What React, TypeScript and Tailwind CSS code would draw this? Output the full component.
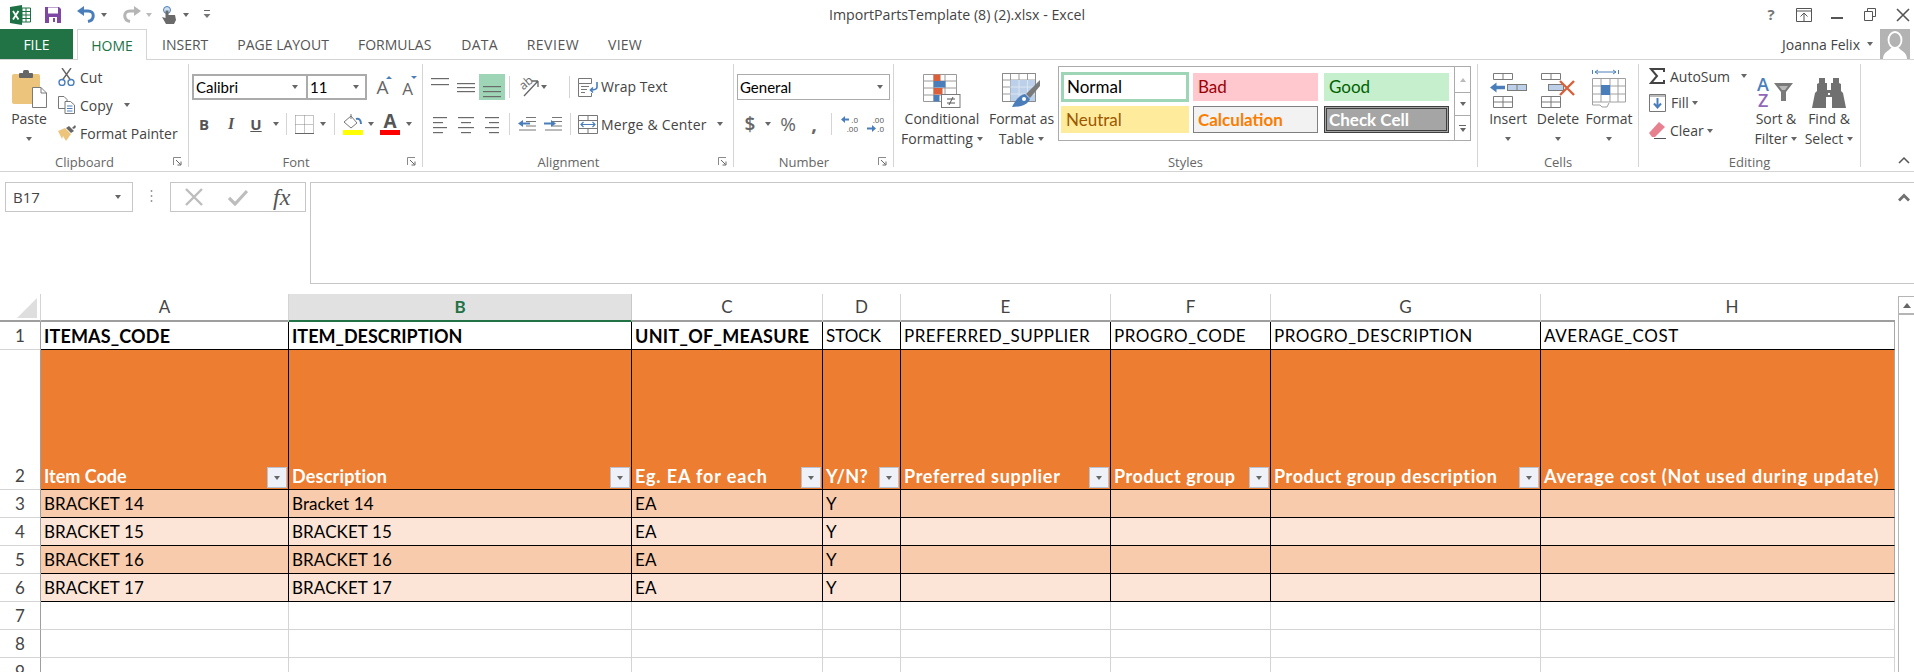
import React from "react";

const Caret = ({ className = "" }: { className?: string }) => (
  <span className={`inline-block w-0 h-0 border-l-[3.5px] border-r-[3.5px] border-t-[4px] border-l-transparent border-r-transparent border-t-[#666] ${className}`} />
);

const Launcher = () => (
  <svg width="9" height="9" viewBox="0 0 9 9" className="absolute right-[6px] bottom-[1px]">
    <path d="M0.5 8V0.5H8" fill="none" stroke="#8a8a8a" />
    <path d="M3 3L7.5 7.5M8 4.5V8H4.5" fill="none" stroke="#666" />
  </svg>
);

const Lines = ({ w, ys, xs }: { w: number; ys: number[]; xs?: number[][] }) => (
  <svg width={w} height={ys[ys.length - 1] + 2} className="block">
    {ys.map((y, i) => (
      <rect key={i} x={xs ? xs[i][0] : 0} y={y} width={xs ? xs[i][1] : w} height="1.2" fill="#6a6a6a" />
    ))}
  </svg>
);

const Sep = () => <div className="w-px h-[22px] bg-[#d4d4d4] shrink-0" />;

const Group = ({ className, label, launcher, children }: { className: string; label: string; launcher?: boolean; children: React.ReactNode }) => (
  <div className={`relative h-[103px] mt-[4px] border-r border-[#d4d4d4] shrink-0 ${className}`}>
    <div className="h-[88px] flex">{children}</div>
    <div className={`h-[15px] leading-[20px] text-center text-[13px] text-[#666] ${launcher ? "pr-[19px]" : ""}`}>{label}</div>
    {launcher && <Launcher />}
  </div>
);

const Tall = ({ className, icon, l1, l2 }: { className: string; icon: React.ReactNode; l1: string; l2?: string }) => (
  <div className={`flex flex-col items-center shrink-0 ${className}`}>
    <div className="h-[45px] flex items-end justify-center pb-[1px]">{icon}</div>
    <div className="h-[20px] leading-[20px] whitespace-nowrap">{l1}</div>
    <div className="h-[19px] leading-[19px] whitespace-nowrap flex items-center gap-[4px]">
      {l2 && <span>{l2}</span>}
      <Caret />
    </div>
  </div>
);

const InsertIcon = () => (
  <svg width="38" height="36" viewBox="0 0 38 36" fill="none" stroke="#7a7a7a">
    <path d="M4.5 1.5H23.5V7.5H4.5ZM14 1.5V7.5M4.5 24.5H23.5V35.5H4.5ZM4.5 30H23.5M14 24.5V35.5" />
    <rect x="18.5" y="12.5" width="19" height="6" fill="#bdd0e9" />
    <path d="M28 12.5V18.5" />
    <path d="M1 15.5L7.5 10.5V13.8H16V17.2H7.5V20.5Z" fill="#4a7ebb" stroke="none" />
  </svg>
);
const DeleteIcon = () => (
  <svg width="37" height="36" viewBox="0 0 37 36" fill="none" stroke="#7a7a7a">
    <path d="M1.5 1.5H20.5V7.5H1.5ZM11 1.5V7.5M1.5 24.5H20.5V35.5H1.5ZM1.5 30H20.5M11 24.5V35.5" />
    <rect x="8.5" y="12.5" width="15" height="6" fill="#bdd0e9" />
    <path d="M20 9L34 23M34 9L20 23" stroke="#d9603a" strokeWidth="2.4" />
  </svg>
);
const FormatIcon = () => (
  <svg width="34" height="39" viewBox="0 0 34 39" fill="none">
    <path d="M0.5 1V5M26.5 1V5M3 3H24M3 3L6 1M3 3L6 5M24 3L21 1M24 3L21 5" stroke="#4a7ebb" />
    <path d="M0.5 9.5H33.5V33H0.5ZM0.5 17H33.5M0.5 25H33.5M9 9.5V33M18 9.5V33M26 9.5V33" stroke="#a0a0a0" />
    <rect x="9" y="16" width="9" height="10" fill="#4a7ebb" />
    <path d="M0.5 33V36H8L10 38H15L17 34" stroke="#a0a0a0" />
  </svg>
);
const CFIcon = () => (
  <svg width="38" height="34" viewBox="0 0 38 34" fill="none">
    <path d="M0.5 0.5H33.5V27.5H0.5ZM0.5 7H33.5M0.5 14H33.5M0.5 21H33.5M11 0.5V27.5M22 0.5V27.5" stroke="#9a9a9a" />
    <rect x="10.5" y="0.5" width="7" height="6.5" fill="#d9603a" />
    <rect x="10.5" y="7" width="12" height="6.5" fill="#4a7ebb" />
    <rect x="10.5" y="14" width="9" height="6.5" fill="#d9603a" />
    <rect x="10.5" y="21" width="6" height="6.5" fill="#4a7ebb" />
    <rect x="18.5" y="20.5" width="18.5" height="13" fill="#fff" stroke="#7a7a7a" />
    <path d="M24 25H32M24 29H32M30 23L26 31" stroke="#555" />
  </svg>
);
const FTIcon = () => (
  <svg width="39" height="35" viewBox="0 0 39 35" fill="none">
    <path d="M0.5 0.5H33.5V28.5H0.5ZM0.5 7H33.5M0.5 14H33.5M0.5 21H33.5M8.5 0.5V28.5M17 0.5V28.5M25.5 0.5V28.5" stroke="#9a9a9a" />
    <rect x="8.5" y="7" width="25" height="21.5" fill="#bdd0e9" />
    <path d="M8.5 14H33.5M8.5 21H33.5M17 7V28.5M25.5 7V28.5" stroke="#dbe5f1" />
    <path d="M0.5 0.5H33.5V28.5H0.5Z" stroke="#8a8a8a" />
    <path d="M38 7L24 21L28 25L38 13Z" fill="#7a7a7a" />
    <path d="M10 34C13 28 17 22 23 21L28 26C26 31 20 34 10 34Z" fill="#4a7ebb" />
    <circle cx="22" cy="26" r="2" fill="#fff" />
  </svg>
);
const Binoculars = () => (
  <svg width="34" height="30" viewBox="0 0 34 30" fill="#707070">
    <path d="M7 0H13V5H15V12H19V5H21V0H27V5L29 6V13L31 15L34 30H20V19H14V30H0L3 15L5 13V6L7 5Z" />
    <path d="M16 15H18V17H16Z" fill="#fff" />
  </svg>
);
const SortIcon = () => (
  <div className="relative w-[38px] h-[32px] font-semibold text-[18px] leading-[16px]">
    <div className="text-[#4a7ebb] pl-[0px]">A</div>
    <div className="text-[#9068b8] pl-[1px]">Z</div>
    <svg width="20" height="19" viewBox="0 0 20 19" className="absolute left-[17px] top-[7px]">
      <path d="M0 0H19L12 9V18H7V9Z" fill="#7a7a7a" />
      <path d="M5 3H14L11 7H8Z" fill="#b8b8b8" />
    </svg>
  </div>
);

const Paste = () => (
  <svg width="35" height="38" viewBox="0 0 35 38">
    <rect x="0" y="4" width="28" height="30" rx="2" fill="#edc47c" />
    <rect x="7" y="3" width="14" height="5" rx="1" fill="#666" />
    <rect x="11" y="0" width="6" height="5" rx="1.5" fill="#666" />
    <path d="M20.5 17.5H29L34.5 23V37.5H20.5Z" fill="#fff" stroke="#7a7a7a" />
    <path d="M29 17.5V23H34.5" fill="none" stroke="#7a7a7a" />
  </svg>
);

const FilterBtn = () => (
  <div className="w-[20px] h-[21px] mb-[1px] mr-px shrink-0 flex items-center justify-center bg-[#eef1f7] border border-[#b8c2d2]">
    <Caret className="border-t-[#555]" />
  </div>
);

const DecIcon = ({ dir }: { dir: "less" | "more" }) => (
  <div className="relative w-[17px] h-[18px] text-[8px] leading-[9px] text-[#555]">
    {dir === "less" ? (
      <>
        <div className="text-right">.0</div>
        <div className="text-right">.00</div>
        <svg width="8" height="7" className="absolute left-0 top-[1px]"><path d="M0 3.5L4 0V2.5H8V4.5H4V7Z" fill="#4a7ebb" /></svg>
      </>
    ) : (
      <>
        <div className="text-right">.00</div>
        <div className="text-right">.0</div>
        <svg width="9" height="7" className="absolute left-0 top-[10px]"><path d="M9 3.5L5 0V2.5H0V4.5H5V7Z" fill="#4a7ebb" /></svg>
      </>
    )}
  </div>
);

const COLS = ["w-[248px]", "w-[343px]", "w-[191px]", "w-[78px]", "w-[210px]", "w-[160px]", "w-[270px]", "w-[354px]"];
const LETTERS = ["A", "B", "C", "D", "E", "F", "G", "H"];
const R1 = [
  { t: "ITEMAS_CODE", c: "font-bold text-[18px] tracking-[0.15px]" },
  { t: "ITEM_DESCRIPTION", c: "font-bold text-[18px]" },
  { t: "UNIT_OF_MEASURE", c: "font-bold text-[18px] tracking-[0.3px]" },
  { t: "STOCK", c: "" },
  { t: "PREFERRED_SUPPLIER", c: "tracking-[0.45px]" },
  { t: "PROGRO_CODE", c: "tracking-[0.55px]" },
  { t: "PROGRO_DESCRIPTION", c: "tracking-[0.54px]" },
  { t: "AVERAGE_COST", c: "tracking-[0.6px]" },
];
const R2 = [
  { t: "Item Code", c: "" },
  { t: "Description", c: "tracking-[0.2px]" },
  { t: "Eg. EA for each", c: "tracking-[0.87px]" },
  { t: "Y/N?", c: "tracking-[0.3px]" },
  { t: "Preferred supplier", c: "tracking-[0.7px]" },
  { t: "Product group", c: "tracking-[0.54px]" },
  { t: "Product group description", c: "tracking-[0.6px]" },
  { t: "Average cost (Not used during update)", c: "tracking-[0.8px]" },
];
const DATA = [
  ["BRACKET 14", "Bracket 14", "EA", "Y"],
  ["BRACKET 15", "BRACKET 15", "EA", "Y"],
  ["BRACKET 16", "BRACKET 16", "EA", "Y"],
  ["BRACKET 17", "BRACKET 17", "EA", "Y"],
];

const RowHead = ({ n, className = "h-[28px]" }: { n: number; className?: string }) => (
  <div className={`w-[41px] shrink-0 border-r border-b border-r-[#9e9e9e] border-b-[#d4d4d4] flex items-end justify-center text-[#444] text-[17px] leading-[27px] ${className}`}>{n}</div>
);

export default function App() {
  return (
    <div className="w-[1914px] h-[672px] overflow-hidden bg-white text-[#444] text-[14px] font-['Open_Sans',sans-serif]">
      {/* title bar */}
      <div className="grid grid-cols-[1fr_auto_1fr] h-[29px] items-center">
        <div className="flex items-center">
          <svg width="21" height="20" viewBox="0 0 21 20" className="ml-[10px]">
            <path d="M0 2L12 0V20L0 18Z" fill="#1e7145" />
            <path d="M12 3H20.5V17H12Z" fill="#fff" stroke="#1e7145" />
            <path d="M12 6.5H20.5M12 10H20.5M12 13.5H20.5M16 3V17" stroke="#1e7145" />
            <path d="M3 6L8.5 14.5M8.5 6L3 14.5" stroke="#fff" strokeWidth="1.8" />
          </svg>
          <svg width="16" height="16" viewBox="0 0 16 16" className="ml-[14px]">
            <path d="M0 0H14L16 2V16H0Z" fill="#7e47a3" />
            <rect x="3" y="0.5" width="10" height="6" fill="#fff" />
            <rect x="4" y="10" width="8" height="6" fill="#fff" />
            <rect x="8" y="11" width="2" height="4" fill="#7e47a3" />
          </svg>
          <svg width="19" height="17" viewBox="0 0 19 17" className="ml-[16px]">
            <path d="M3 5H11C18 5 18 14 11 15.5" fill="none" stroke="#4a7ebb" strokeWidth="3" />
            <path d="M0 5L7 0V10Z" fill="#4a7ebb" />
          </svg>
          <Caret className="ml-[5px]" />
          <svg width="19" height="17" viewBox="0 0 19 17" className="ml-[15px]">
            <path d="M16 5H8C1 5 1 14 8 15.5" fill="none" stroke="#b5b5b5" strokeWidth="3" />
            <path d="M19 5L12 0V10Z" fill="#b5b5b5" />
          </svg>
          <Caret className="ml-[5px] border-t-[#bbb]" />
          <svg width="15" height="18" viewBox="0 0 15 18" className="ml-[10px]">
            <circle cx="5" cy="4" r="3.5" fill="#cfdff0" stroke="#4a7ebb" />
            <path d="M3.5 4.5H6.5V9H13L14 14L12 18H4L0 11L3.5 12Z" fill="#6a6a6a" />
          </svg>
          <Caret className="ml-[6px] border-t-[#333]" />
          <svg width="8" height="9" viewBox="0 0 8 9" className="ml-[14px]">
            <path d="M1 0.5H7" stroke="#666" />
            <path d="M0.5 4H7.5L4 8Z" fill="#777" />
          </svg>
        </div>
        <div className="text-[14.2px] text-[#444] whitespace-nowrap">ImportPartsTemplate (8) (2).xlsx - Excel</div>
        <div className="flex items-center justify-end gap-[17px] pr-[3px]">
          <div className="w-[16px] text-center font-bold text-[15px] text-[#777] leading-none">?</div>
          <svg width="16" height="14" viewBox="0 0 16 14" fill="none" stroke="#555"><path d="M0.5 0.5H15.5V13.5H0.5ZM0.5 3H15.5M8 13V5M4.5 8.5L8 5L11.5 8.5" /></svg>
          <svg width="16" height="14" viewBox="0 0 16 14"><rect x="2" y="9" width="12" height="2" fill="#555" /></svg>
          <svg width="16" height="14" viewBox="0 0 16 14" fill="none" stroke="#555"><path d="M5.5 3.5V0.5H13.5V8.5H10.5M2.5 3.5H10.5V12.5H2.5Z" /></svg>
          <svg width="16" height="14" viewBox="0 0 16 14" fill="none" stroke="#555" strokeWidth="1.6"><path d="M2 1L14 13M14 1L2 13" /></svg>
        </div>
      </div>

      {/* tab bar */}
      <div className="h-[31px] flex border-b border-[#d4d4d4]">
        <div className="w-[73px] bg-[#217346] text-white flex items-center justify-center">FILE</div>
        <div className="w-[70px] ml-[4px] h-[31px] bg-white border border-b-0 border-[#d4d4d4] text-[#217346] flex items-center justify-center relative">HOME</div>
        <div className="flex items-center gap-[29px] ml-[15px] text-[#555]">
          <span>INSERT</span>
          <span>PAGE LAYOUT</span>
          <span>FORMULAS</span>
          <span className="ml-[1px] tracking-[0.2px]">DATA</span>
          <span className="tracking-[0.5px]">REVIEW</span>
          <span className="tracking-[0.2px]">VIEW</span>
        </div>
        <div className="ml-auto flex items-center">
          <span className="text-[#444]">Joanna Felix</span>
          <Caret className="ml-[7px] mr-[7px]" />
          <div className="w-[30px] h-[30px] bg-[#b3b3b3] mr-[4px] overflow-hidden">
            <svg width="30" height="30" viewBox="0 0 30 30">
              <ellipse cx="15" cy="11" rx="6.5" ry="8" fill="none" stroke="#fff" strokeWidth="1.8" />
              <path d="M3 30C3 23 9 22 11 19H19C21 22 27 23 27 30Z" fill="#fff" />
            </svg>
          </div>
        </div>
      </div>

      {/* ribbon */}
      <div className="h-[112px] flex border-b border-[#d4d4d4] relative">
        <Group className="w-[189px]" label="Clipboard" launcher>
          <Tall className="w-[52px] ml-[3px]" icon={<Paste />} l1="Paste" />
          <div className="ml-[3px] -mt-px flex flex-col">
            <div className="h-[28px] flex items-center">
              <svg width="17" height="18" viewBox="0 0 17 18" fill="none">
                <path d="M4 0L12.5 12M13 0L4.5 12" stroke="#666" strokeWidth="1.4" />
                <circle cx="4" cy="14.5" r="3" stroke="#4a7ebb" strokeWidth="1.4" />
                <circle cx="13" cy="14.5" r="3" stroke="#4a7ebb" strokeWidth="1.4" />
              </svg>
              <span className="ml-[5px]">Cut</span>
            </div>
            <div className="h-[28px] flex items-center">
              <svg width="17" height="18" viewBox="0 0 17 18" fill="#fff" stroke="#777">
                <path d="M0.5 0.5H6L9 3.5V12.5H0.5Z" />
                <path d="M7 5.5H12.5L16.5 9V17.5H7Z" />
                <path d="M9 10H14.5M9 12.5H14.5M9 15H14.5" stroke="#4a7ebb" />
              </svg>
              <span className="ml-[5px]">Copy</span>
              <Caret className="ml-[11px]" />
            </div>
            <div className="h-[28px] flex items-center">
              <svg width="18" height="16" viewBox="0 0 18 16">
                <path d="M0 6L7 3L13 9L8 16L5 11L4 14L0 6Z" fill="#edc47c" />
                <path d="M8 3L11 1L16 6L13 8Z" fill="#666" />
                <path d="M14 3L17 0L18 2L16 4Z" fill="#666" />
              </svg>
              <span className="ml-[4px] whitespace-nowrap">Format Painter</span>
            </div>
          </div>
        </Group>

        <Group className="w-[234px]" label="Font" launcher>
          <div className="flex flex-col pt-[10px]">
            <div className="flex h-[26px] items-center">
              <div className="ml-[3px] w-[115px] h-[26px] border-2 border-r border-[#ababab] flex items-center justify-between pl-[2px] pr-[8px] font-['Lato',sans-serif] text-[15px] text-black">
                Calibri <Caret />
              </div>
              <div className="w-[60px] h-[26px] border-2 border-l border-[#ababab] flex items-center justify-between pl-[2px] pr-[6px] font-['Lato',sans-serif] text-[15px] text-black">
                11 <Caret />
              </div>
              <div className="relative ml-[7px] w-[17px] text-center text-[19px] text-[#666] leading-none">A
                <span className="absolute -top-[2px] -right-[1px] w-0 h-0 border-l-[3px] border-r-[3px] border-b-[3px] border-l-transparent border-r-transparent border-b-[#4a7ebb]" />
              </div>
              <div className="relative ml-[8px] w-[17px] text-center text-[17px] text-[#666] leading-none pt-[2px]">A
                <span className="absolute -top-[2px] -right-[1px] w-0 h-0 border-l-[3px] border-r-[3px] border-t-[3px] border-l-transparent border-r-transparent border-t-[#4a7ebb]" />
              </div>
            </div>
            <div className="flex h-[26px] items-center mt-[11px]">
              <span className="ml-[9px] w-[12px] font-bold text-[15px] text-[#555] text-center">B</span>
              <span className="ml-[15px] w-[12px] font-bold italic text-[16px] text-[#555] text-center font-['Liberation_Serif',serif]">I</span>
              <span className="ml-[13px] w-[12px] font-bold underline text-[15px] text-[#555] text-center">U</span>
              <Caret className="ml-[11px]" />
              <div className="ml-[7px]"><Sep /></div>
              <svg width="19" height="19" viewBox="0 0 19 19" fill="none" className="ml-[8px]">
                <path d="M0.5 0.5H18.5M0.5 9.5H18.5M0.5 0.5V18.5M9.5 0.5V18.5M18.5 0.5V18.5" stroke="#888" strokeDasharray="1 1" />
                <path d="M0 18.5H19" stroke="#666" />
              </svg>
              <Caret className="ml-[6px]" />
              <div className="ml-[8px]"><Sep /></div>
              <div className="ml-[7px] flex flex-col items-center w-[21px]">
                <svg width="21" height="17" viewBox="0 0 21 17" fill="none">
                  <path d="M2 9L9 3L15 10L9 15Z" fill="#fff" stroke="#777" />
                  <path d="M9 6V1" stroke="#777" />
                  <path d="M14 6C17 5 19 7 19 11" stroke="#4a7ebb" strokeWidth="2" />
                </svg>
                <div className="w-[20px] h-[5px] bg-[#ffff00]" />
              </div>
              <Caret className="ml-[5px]" />
              <div className="ml-[6px] flex flex-col items-center w-[20px]">
                <span className="h-[17px] font-bold text-[19px] leading-[17px] text-[#555]">A</span>
                <div className="w-[20px] h-[5px] bg-[#ff0000]" />
              </div>
              <Caret className="ml-[6px]" />
            </div>
          </div>
        </Group>

        <Group className="w-[311px]" label="Alignment" launcher>
          <div className="flex flex-col pt-[10px]">
            <div className="flex h-[26px] items-start">
              <div className="ml-[8px] mt-[2px]"><Lines w={18} ys={[2, 8]} /></div>
              <div className="ml-[8px] mt-[8px]"><Lines w={18} ys={[1, 5, 9]} /></div>
              <div className="ml-[4px] w-[26px] h-[26px] bg-[#9fd5b7] flex justify-center"><Lines w={18} ys={[12, 17, 22]} /></div>
              <div className="ml-[4px] mt-[2px]"><Sep /></div>
              <div className="relative ml-[8px] mt-[2px] w-[22px] h-[22px] text-[12px] text-[#666]">
                <span className="absolute left-[1px] top-[-1px] leading-[16px] rotate-[-40deg]">ab</span>
                <svg width="22" height="22" viewBox="0 0 22 22" fill="none" className="absolute left-0 top-0">
                  <path d="M6 20L20 5M20 5H14M20 5V11" stroke="#666" strokeWidth="1.3" />
                </svg>
              </div>
              <Caret className="ml-[1px] mt-[11px]" />
              <div className="ml-[22px] mt-[2px]"><Sep /></div>
              <svg width="20" height="19" viewBox="0 0 20 19" fill="none" className="ml-[8px] mt-[4px]">
                <path d="M0.5 0.5H13.5V5.5H0.5ZM0.5 5.5V18.5H13.5V15" stroke="#777" />
                <path d="M3 8.5H11M3 11.5H9M3 14.5H7" stroke="#777" />
                <path d="M19 4V9C19 12 16 12 13 12M15 9.5L12.5 12L15 14.5" stroke="#4a7ebb" strokeWidth="1.6" />
              </svg>
              <span className="ml-[3px] whitespace-nowrap leading-[26px]">Wrap Text</span>
            </div>
            <div className="flex h-[26px] items-center mt-[11px]">
              <div className="ml-[10px] mt-[2px]"><Lines w={14} ys={[0, 5, 10, 15]} xs={[[0, 14], [0, 10], [0, 14], [0, 10]]} /></div>
              <div className="ml-[11px] mt-[2px]"><Lines w={16} ys={[0, 5, 10, 15]} xs={[[0, 16], [3, 10], [0, 16], [3, 10]]} /></div>
              <div className="ml-[11px] mt-[2px]"><Lines w={14} ys={[0, 5, 10, 15]} xs={[[0, 14], [4, 10], [0, 14], [4, 10]]} /></div>
              <div className="ml-[10px]"><Sep /></div>
              <svg width="18" height="14" viewBox="0 0 18 14" className="ml-[8px]">
                <path d="M8 0.5H18M8 4.5H18M8 9H18M1 13H18" stroke="#777" />
                <path d="M0 6.5L5 3V5.5H12V7.5H5V10Z" fill="#4a7ebb" />
              </svg>
              <svg width="18" height="14" viewBox="0 0 18 14" className="ml-[8px]">
                <path d="M8 0.5H18M8 4.5H18M8 9H18M1 13H18" stroke="#777" />
                <path d="M12 6.5L7 3V5.5H0V7.5H7V10Z" fill="#4a7ebb" />
              </svg>
              <div className="ml-[8px]"><Sep /></div>
              <svg width="20" height="19" viewBox="0 0 20 19" fill="none" className="ml-[7px]">
                <path d="M0.5 0.5H19.5V18.5H0.5ZM0.5 5.5H19.5M0.5 13.5H19.5M10 0.5V5.5M10 13.5V18.5" stroke="#777" />
                <path d="M3 9.5H17M5.5 7L3 9.5L5.5 12M14.5 7L17 9.5L14.5 12" stroke="#4a7ebb" strokeWidth="1.2" />
              </svg>
              <span className="ml-[3px] whitespace-nowrap tracking-[0.2px]">Merge &amp; Center</span>
              <Caret className="ml-[10px]" />
            </div>
          </div>
        </Group>

        <Group className="w-[160px]" label="Number" launcher>
          <div className="flex flex-col pt-[10px]">
            <div className="ml-[3px] w-[153px] h-[26px] border border-[#ababab] flex items-center justify-between pl-[2px] pr-[6px] font-['Lato',sans-serif] text-[15px] text-black">
              General <Caret />
            </div>
            <div className="flex h-[26px] items-center mt-[11px] text-[#666]">
              <span className="ml-[10px] text-[19px] w-[12px] text-center font-semibold">$</span>
              <Caret className="ml-[9px]" />
              <span className="ml-[8px] text-[19px] w-[18px] text-center">%</span>
              <span className="ml-[13px] text-[20px] font-bold w-[8px] text-center">,</span>
              <div className="ml-[13px]"><Sep /></div>
              <div className="ml-[9px]"><DecIcon dir="less" /></div>
              <div className="ml-[9px]"><DecIcon dir="more" /></div>
            </div>
          </div>
        </Group>

        <Group className="w-[584px]" label="Styles">
          <Tall className="w-[86px] ml-[5px]" icon={<CFIcon />} l1="Conditional" l2="Formatting" />
          <Tall className="w-[73px]" icon={<FTIcon />} l1="Format as" l2="Table" />
          <div className="mt-[2px] w-[413px] h-[75px] border border-[#ababab] flex font-['Lato',sans-serif] text-[17px]">
            <div className="w-[395px] grid grid-cols-[128px_127px_125px] grid-rows-[30px_27px] gap-x-[4px] gap-y-[4px] pl-[2px] pt-[5px]">
              <div className="bg-white border-[3px] border-[#9fd5b7] text-black flex items-center pl-[3px]">Normal</div>
              <div className="bg-[#ffc7ce] text-[#9c0006] flex items-center pl-[5px] my-[1px] mr-[2px]">Bad</div>
              <div className="bg-[#c6efce] text-[#006100] flex items-center pl-[5px] my-[1px]">Good</div>
              <div className="bg-[#ffeb9c] text-[#9c5700] flex items-center pl-[5px]">Neutral</div>
              <div className="bg-[#f2f2f2] border border-[#7f7f7f] text-[#fa7d00] font-bold flex items-center pl-[4px] mr-[2px]">Calculation</div>
              <div className="bg-[#a5a5a5] border-[3px] border-double border-[#3f3f3f] text-white font-bold flex items-center pl-[2px]">Check Cell</div>
            </div>
            <div className="flex-1 border-l border-[#ababab] flex flex-col">
              <div className="h-[26px] border-b border-[#ababab] flex items-center justify-center">
                <span className="w-0 h-0 border-l-[3.5px] border-r-[3.5px] border-b-[4px] border-l-transparent border-r-transparent border-b-[#bbb]" />
              </div>
              <div className="h-[23px] border-b border-[#ababab] flex items-center justify-center"><Caret /></div>
              <div className="flex-1 flex flex-col items-center justify-center gap-[2px]">
                <div className="w-[7px] h-px bg-[#666]" />
                <Caret />
              </div>
            </div>
          </div>
        </Group>

        <Group className="w-[161px]" label="Cells">
          <Tall className="w-[50px] ml-[5px]" icon={<InsertIcon />} l1="Insert" />
          <Tall className="w-[50px]" icon={<DeleteIcon />} l1="Delete" />
          <Tall className="w-[52px]" icon={<FormatIcon />} l1="Format" />
        </Group>

        <Group className="w-[222px]" label="Editing">
          <div className="w-[110px] pl-[10px] flex flex-col">
            <div className="h-[24px] flex items-center">
              <svg width="16" height="16" viewBox="0 0 16 16" fill="none"><path d="M15 4V1H2L8 8L2 15H15V12" stroke="#444" strokeWidth="2" /></svg>
              <span className="ml-[5px]">AutoSum</span>
              <Caret className="ml-[11px]" />
            </div>
            <div className="h-[29px] flex items-center">
              <svg width="17" height="18" viewBox="0 0 17 18" fill="none"><path d="M0.5 0.5H16.5V17.5H0.5Z" stroke="#777" /><path d="M0.5 2H16.5" stroke="#777" /><path d="M8.5 4V13M5 9.5L8.5 13.5L12 9.5" stroke="#4a7ebb" strokeWidth="2" /></svg>
              <span className="ml-[5px]">Fill</span>
              <Caret className="ml-[3px]" />
            </div>
            <div className="h-[27px] flex items-center">
              <svg width="17" height="17" viewBox="0 0 17 17"><path d="M0 11L10 0L16 5L6 15H3Z" fill="#e8818f" /><path d="M5 16.5H17" stroke="#555" /></svg>
              <span className="ml-[4px]">Clear</span>
              <Caret className="ml-[3px]" />
            </div>
          </div>
          <Tall className="w-[54px]" icon={<SortIcon />} l1="Sort &" l2="Filter" />
          <Tall className="w-[52px]" icon={<Binoculars />} l1="Find &" l2="Select" />
        </Group>
        <svg width="12" height="8" viewBox="0 0 12 8" fill="none" className="absolute right-[4px] bottom-[7px]"><path d="M1 7L6 2L11 7" stroke="#555" strokeWidth="1.5" /></svg>
      </div>

      {/* formula bar */}
      <div className="h-[122px] flex items-start pt-[10px] relative">
        <div className="ml-[5px] w-[128px] h-[30px] border border-[#c6c6c6] flex items-center justify-between pl-[7px] pr-[11px] text-[15px]">B17 <Caret /></div>
        <svg width="3" height="14" className="ml-[17px] mt-[8px]"><path d="M1.5 0V2M1.5 5V7M1.5 10V12" stroke="#999" strokeWidth="1.5" /></svg>
        <div className="ml-[17px] w-[136px] h-[30px] border border-[#c6c6c6] flex items-center">
          <svg width="18" height="18" viewBox="0 0 18 18" className="ml-[14px] shrink-0"><path d="M1 1L17 17M17 1L1 17" stroke="#bdbdbd" strokeWidth="2.4" /></svg>
          <svg width="20" height="18" viewBox="0 0 20 18" className="ml-[25px] shrink-0"><path d="M1 10L7 16L19 3" fill="none" stroke="#bdbdbd" strokeWidth="3.2" /></svg>
          <span className="ml-[25px] font-['Liberation_Serif',serif] italic text-[24px] leading-none text-[#555]">fx</span>
        </div>
        <div className="ml-[4px] flex-1 h-[102px] border border-[#c6c6c6] border-r-0" />
        <svg width="12" height="9" viewBox="0 0 12 9" fill="none" className="absolute right-[4px] top-[21px]"><path d="M1 7.5L6 2.5L11 7.5" stroke="#707070" strokeWidth="2.8" /></svg>
      </div>

      {/* sheet */}
      <div className="flex font-['Lato',sans-serif] text-[17px] text-black">
        <div className="w-[1895px] shrink-0">
          <div className="flex h-[28px]">
            <div className="w-[41px] h-[28px] border-b-2 border-b-[#9e9e9e] border-r border-r-[#d4d4d4] flex items-end justify-end pr-[3px] pb-[2px]">
              <svg width="20" height="20"><path d="M0 20H20V0Z" fill="#dedede" /></svg>
            </div>
            {LETTERS.map((l, i) => (
              <div
                key={l}
                className={`${COLS[i]} h-[28px] flex items-center justify-center ${
                  i === 1
                    ? "bg-[#e1e1e1] border-b-2 border-b-[#217346] text-[#217346] font-bold border-r border-r-[#c8c8c8]"
                    : i === 7
                      ? "border-b-2 border-b-[#9e9e9e] text-[#444] pl-[28px]"
                      : "border-b-2 border-b-[#9e9e9e] border-r border-r-[#d4d4d4] text-[#444]"
                }`}
              >
                {l}
              </div>
            ))}
          </div>
          <div className="flex h-[28px]">
            <RowHead n={1} />
            {R1.map((t, i) => (
              <div key={t.t} className={`${COLS[i]} h-[28px] border-b border-b-black border-r ${i === 7 ? "border-r-[#a8a8a8]" : "border-r-black"} pl-[3px] leading-[28px] whitespace-nowrap ${t.c}`}>{t.t}</div>
            ))}
          </div>
          <div className="flex h-[140px]">
            <RowHead n={2} className="h-[140px]" />
            {R2.map((t, i) => (
              <div key={t.t} className={`${COLS[i]} h-[140px] bg-[#ed7d31] border-b border-b-black border-r ${i === 7 ? "border-r-[#a8a8a8]" : "border-r-black"} pl-[3px] flex items-end justify-between text-white font-bold text-[18px]`}>
                <span className={`leading-[25px] whitespace-nowrap ${t.c}`}>{t.t}</span>
                {i < 7 && <FilterBtn />}
              </div>
            ))}
          </div>
          {DATA.map((row, r) => (
            <div key={r} className="flex h-[28px]">
              <RowHead n={r + 3} />
              {COLS.map((c, i) => (
                <div key={i} className={`${c} h-[28px] ${r % 2 === 0 ? "bg-[#f8cbad]" : "bg-[#fce4d6]"} border-b border-b-black border-r ${i === 7 ? "border-r-[#a8a8a8]" : "border-r-black"} pl-[3px] leading-[28px] whitespace-nowrap tracking-[0.1px]`}>{row[i] ?? ""}</div>
              ))}
            </div>
          ))}
          {[7, 8, 9].map((n) => (
            <div key={n} className="flex h-[28px]">
              <RowHead n={n} />
              {COLS.map((c, i) => (
                <div key={i} className={`${c} h-[28px] border-b border-r border-[#d4d4d4]`} />
              ))}
            </div>
          ))}
        </div>
        <div className="ml-[3px] w-[16px] mt-[2px] border-l border-[#b5b5b5] h-[400px]">
          <div className="h-[19px] border-t border-b-2 border-[#b5b5b5] flex items-center justify-center">
            <span className="w-0 h-0 border-l-[4.5px] border-r-[4.5px] border-b-[5px] border-l-transparent border-r-transparent border-b-[#666]" />
          </div>
        </div>
      </div>
    </div>
  );
}
